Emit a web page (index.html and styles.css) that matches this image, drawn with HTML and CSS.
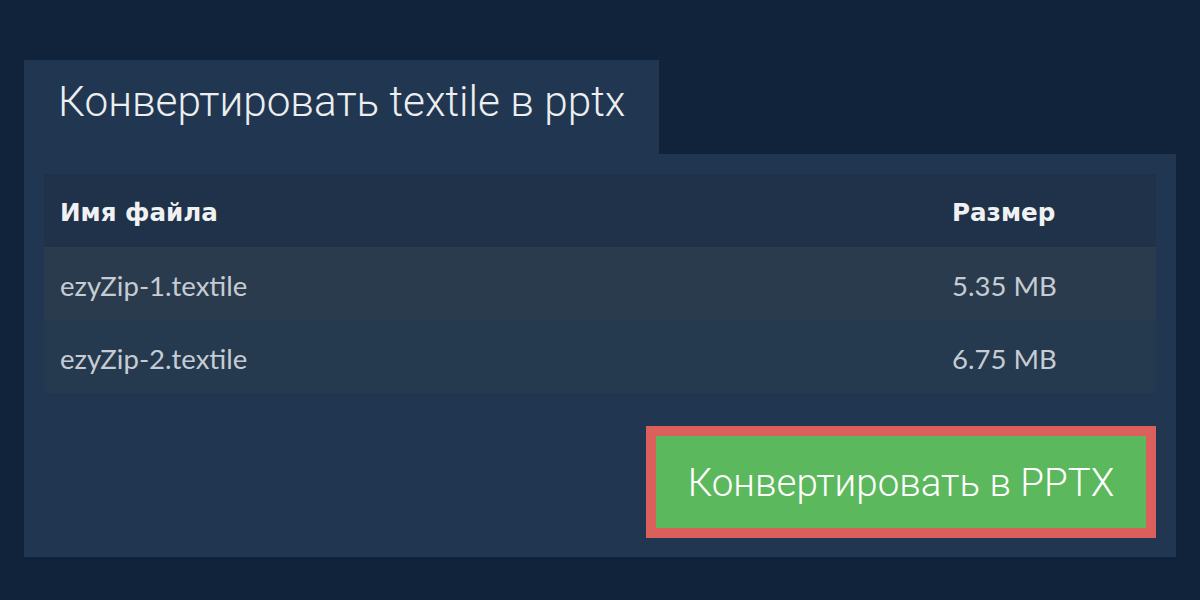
FILE: index.html
```html
<!DOCTYPE html>
<html lang="ru">
<head>
<meta charset="utf-8">
<title>Конвертировать textile в pptx</title>
<link rel="stylesheet" href="styles.css">
</head>
<body>
<div class="wrap">
  <div class="tab"><h1 class="title">Конвертировать textile в pptx</h1></div>
  <div class="panel">
    <div class="table">
      <div class="row head"><span class="c-name">Имя файла</span><span class="c-size">Размер</span></div>
      <div class="row odd"><span class="c-name">ezyZip-1.textile</span><span class="c-size">5.35 MB</span></div>
      <div class="row even"><span class="c-name">ezyZip-2.textile</span><span class="c-size">6.75 MB</span></div>
    </div>
    <div class="actions">
      <button class="convert">Конвертировать в PPTX</button>
    </div>
  </div>
</div>
</body>
</html>
```

FILE: styles.css
```css
html, body {
  margin: 0;
  padding: 0;
  background: #10233a;
  width: 1200px;
  height: 600px;
  overflow: hidden;
}
.wrap {
  padding: 60px 0 0 24px;
  width: 1152px;
}
.tab {
  width: 635px;
  height: 94px;
  background: #213650;
  display: flex;
  align-items: center;
  box-sizing: border-box;
  padding: 0 0 12px 34px;
}
.title {
  margin: 0;
  font-family: "Roboto", sans-serif;
  font-weight: 300;
  font-size: 42.3px;
  color: #eceef0;
}
.panel {
  background: #213650;
  padding: 20px 20px 19px 20px;
}
.table {
  display: flex;
  flex-direction: column;
}
.row {
  height: 73px;
  display: flex;
  align-items: center;
  font-family: "Lato", sans-serif;
  font-size: 27.5px;
  color: #c6ccd3;
  padding-top: 4px;
  box-sizing: border-box;
}
.row.head {
  background: #1f3249;
  font-family: "DejaVu Sans", sans-serif;
  font-weight: 700;
  color: #f0f1f2;
  font-size: 24.6px;
}
.row.odd { background: #2b3b4e; }
.row.even { background: #25394f; }
.c-name {
  padding-left: 16px;
  width: 892px;
}
.c-size {
  flex: 1;
}
.actions {
  display: flex;
  justify-content: flex-end;
  margin-top: 33px;
}
.convert {
  width: 510px;
  height: 112px;
  border: 10px solid #db605c;
  background: #5cb85c;
  color: #ffffff;
  font-family: "Roboto", sans-serif;
  font-weight: 300;
  font-size: 38.5px;
  padding: 0;
  margin: 0;
  cursor: pointer;
}
```
